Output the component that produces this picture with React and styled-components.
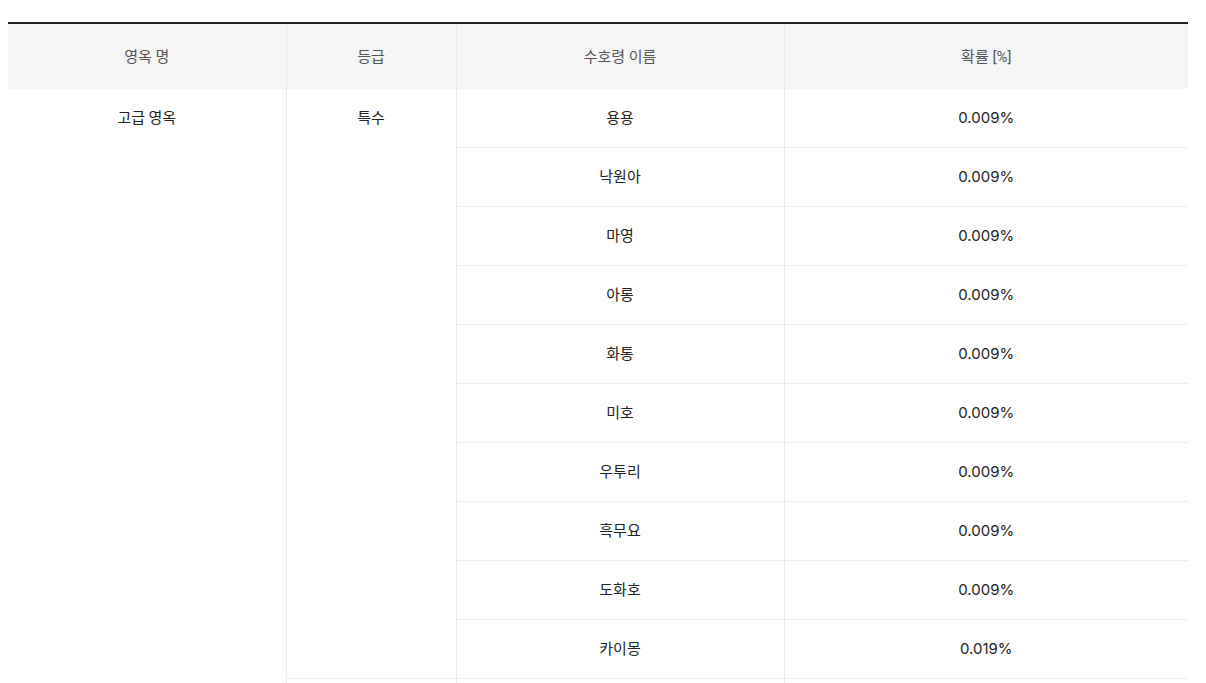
import styled, { createGlobalStyle } from 'styled-components';

const GlobalStyle = createGlobalStyle`
  body {
    margin: 0;
    background: #fff;
    font-family: "Noto Sans CJK KR", "Noto Sans", sans-serif;
  }
`;

const Wrap = styled.div`
  padding: 22px 18px 0 8px;
`;

const Table = styled.table`
  width: 1180px;
  border-collapse: collapse;
  table-layout: fixed;
  border-top: 2px solid #222;
`;

const Th = styled.th`
  height: 63px;
  padding: 0 0 2px;
  background: #f5f5f5;
  color: #555;
  font-family: Roboto, "Noto Sans CJK KR", sans-serif;
  font-size: 15px;
  font-weight: 400;
  text-align: center;
  vertical-align: middle;
  border-left: ${({ $first }) => ($first ? 'none' : '1px solid #e8e8e8')};
`;

const Td = styled.td`
  height: 55px;
  padding: 0 0 3px;
  color: #222;
  font-size: 15px;
  text-align: center;
  vertical-align: middle;
  border-bottom: 1px solid #ececec;
  border-left: 1px solid #ececec;
`;

const GroupCell = styled(Td)`
  vertical-align: top;
  padding-top: 17px;
  border-left: ${({ $first }) => ($first ? 'none' : '1px solid #ececec')};
  border-bottom: ${({ $open }) => ($open ? 'none' : '1px solid #ececec')};
`;

const Num = styled.span`
  font-family: Inter, "Noto Sans", sans-serif;
  font-size: 15px;
`;

const rows = [
  ['용용', '0.009%'],
  ['낙원아', '0.009%'],
  ['마영', '0.009%'],
  ['아롱', '0.009%'],
  ['화통', '0.009%'],
  ['미호', '0.009%'],
  ['우투리', '0.009%'],
  ['흑무요', '0.009%'],
  ['도화호', '0.009%'],
  ['카이몽', '0.019%'],
];

export default function App() {
  return (
    <>
      <GlobalStyle />
      <Wrap>
        <Table>
          <colgroup>
            <col style={{ width: 278 }} />
            <col style={{ width: 170 }} />
            <col style={{ width: 328 }} />
            <col style={{ width: 404 }} />
          </colgroup>
          <thead>
            <tr>
              <Th $first>영옥 명</Th>
              <Th>등급</Th>
              <Th>수호령 이름</Th>
              <Th>확률 [%]</Th>
            </tr>
          </thead>
          <tbody>
            {rows.map(([name, rate], i) => (
              <tr key={name}>
                {i === 0 && (
                  <GroupCell $first $open rowSpan={rows.length + 1}>
                    고급 영옥
                  </GroupCell>
                )}
                {i === 0 && <GroupCell rowSpan={rows.length}>특수</GroupCell>}
                <Td>{name}</Td>
                <Td>
                  <Num>{rate}</Num>
                </Td>
              </tr>
            ))}
            <tr>
              <Td />
              <Td />
              <Td />
            </tr>
          </tbody>
        </Table>
      </Wrap>
    </>
  );
}
